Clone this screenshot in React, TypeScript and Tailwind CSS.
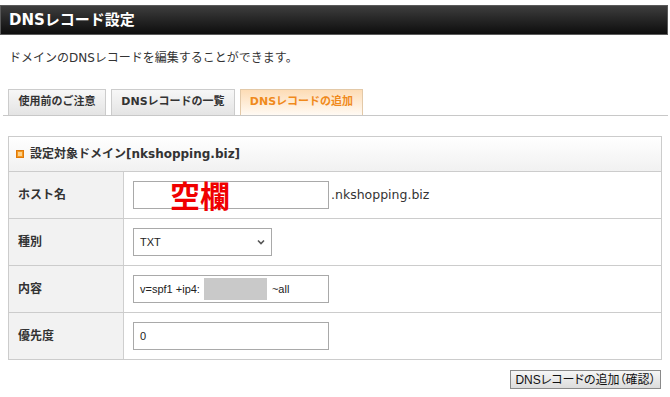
export default function App() {
  const rowLabel =
    "w-[115px] shrink-0 self-stretch flex items-center pl-[9px] bg-[#f2f2f2] border-r border-[#cfcfcf] font-bold text-[12px] text-[#333]";
  const inputBox =
    "h-[28px] border border-[#a9a9a9] bg-white flex items-center pl-[6px] text-[11px] text-[#222] [font-family:Liberation_Sans,Noto_Sans_CJK_JP,sans-serif]";
  return (
    <div className="w-[670px] h-[397px] bg-white overflow-hidden text-[#333] [font-family:DejaVu_Sans,Noto_Sans_CJK_JP,sans-serif]">
      <div className="pt-[5px]">
        <div className="h-[30px] w-[668px] border border-[#5a5a5a] bg-gradient-to-b from-[#3e3e3e] to-[#0e0e0e] flex items-center pl-[8px] text-white font-bold text-[15px]">
          DNSレコード設定
        </div>
        <p className="mt-[14px] ml-[9px] text-[12px] leading-[18px] text-[#333]">
          ドメインのDNSレコードを編集することができます。
        </p>
        <div className="mt-[22px] ml-[3px] w-[665px] h-[27px] border-b border-[#c8c8c8] flex items-end gap-[5px] pl-[5px]">
          <div className="w-[98px] h-[26px] border border-b-0 border-[#cccccc] bg-gradient-to-b from-[#f7f7f7] to-[#e4e4e4] flex items-center justify-center font-bold text-[11px] text-[#333]">
            使用前のご注意
          </div>
          <div className="w-[124px] h-[26px] border border-b-0 border-[#cccccc] bg-gradient-to-b from-[#f7f7f7] to-[#e4e4e4] flex items-center justify-center font-bold text-[11px] text-[#333]">
            DNSレコードの一覧
          </div>
          <div className="w-[123px] h-[26px] border border-b-0 border-[#e3c9a8] bg-gradient-to-b from-[#fddcb5] to-[#fffaf4] flex items-center justify-center font-bold text-[11px] text-[#f08a1c]">
            DNSレコードの追加
          </div>
        </div>

        <div className="mt-[20px] ml-[8px] w-[654px] border border-[#cccccc]">
          <div className="h-[35px] border-b border-[#cccccc] bg-gradient-to-b from-[#ffffff] to-[#f1f1f1] flex items-center pl-[7px] gap-[6px]">
            <div className="w-[8px] h-[8px] bg-[#f39a1e] border border-[#e0780a] flex items-center justify-center">
              <div className="w-[4px] h-[4px] bg-[#ffd08a]" />
            </div>
            <span className="font-bold text-[12px] text-[#333]">設定対象ドメイン[nkshopping.biz]</span>
          </div>

          <div className="h-[47px] border-b border-[#cccccc] flex items-center">
            <div className={rowLabel}>ホスト名</div>
            <div className="pl-[9px] flex items-center">
              <div className="relative">
                <div className={inputBox + " w-[196px]"} />
                <span className="absolute left-[37px] top-[-6px] text-[30px] leading-[38px] font-bold text-[#f00000] [font-family:Noto_Sans_CJK_JP,sans-serif]">
                  空欄
                </span>
              </div>
              <span className="ml-[2px] text-[12.5px] text-[#333]">.nkshopping.biz</span>
            </div>
          </div>

          <div className="h-[47px] border-b border-[#cccccc] flex items-center">
            <div className={rowLabel}>種別</div>
            <div className="pl-[9px] flex items-center">
              <div className={inputBox + " w-[139px] justify-between pr-[6px]"}>
                <span>TXT</span>
                <svg width="8" height="6" viewBox="0 0 8 6">
                  <path d="M1 1.5 L4 4.5 L7 1.5" fill="none" stroke="#555" strokeWidth="1.6" />
                </svg>
              </div>
            </div>
          </div>

          <div className="h-[47px] border-b border-[#cccccc] flex items-center">
            <div className={rowLabel}>内容</div>
            <div className="pl-[9px] flex items-center">
              <div className={inputBox + " w-[196px] pl-[4px]"}>
                <span>v=spf1 +ip4:</span>
                <span className="inline-block w-[63px] h-[22px] bg-[#c9c9c9] ml-[4px]" />
                <span className="ml-[5px]">~all</span>
              </div>
            </div>
          </div>

          <div className="h-[46px] flex items-center">
            <div className={rowLabel}>優先度</div>
            <div className="pl-[9px] flex items-center">
              <div className={inputBox + " w-[196px]"}>0</div>
            </div>
          </div>
        </div>

        <div className="mt-[10px] ml-[510px] w-[151px] h-[19px] border border-[#8a8a8a] bg-gradient-to-b from-[#f6f6f6] to-[#dcdcdc] flex items-center justify-center text-[12px] text-[#111] [font-family:Liberation_Sans,Noto_Sans_CJK_JP,sans-serif] [font-feature-settings:'palt']">
          DNSレコードの追加（確認）
        </div>
      </div>
    </div>
  );
}
